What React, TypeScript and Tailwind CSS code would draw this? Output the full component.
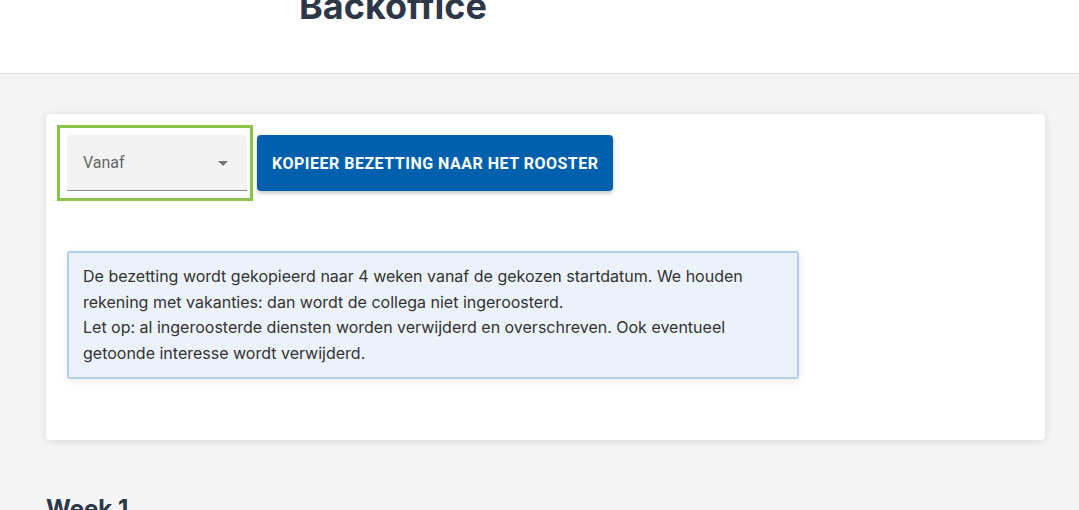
export default function App() {
    return (
        <div className="min-h-[510px] bg-[#f5f5f5] font-['Inter',sans-serif] overflow-hidden">
            <header className="h-[74px] bg-white border-b border-[#dddddd] overflow-hidden">
                <h1 className="pl-[299px] mt-[-12px] text-[36px] leading-[36px] font-bold text-[#2d3748]">
                    Backoffice
                </h1>
            </header>

            <main className="pl-[46px] pt-[40px]">
                <section className="w-[999px] h-[326px] bg-white rounded-[4px] shadow-[0_1px_8px_rgba(0,0,0,0.12)] pt-[21px] px-[21px]">
                    <div className="flex items-start">
                        <div className="relative">
                            <div className="absolute -left-[10px] -right-[6px] -top-[10px] -bottom-[10px] border-[3px] border-[#8bc34a]" />
                            <div className="relative w-[180px] h-[56px] bg-[#f3f3f3] rounded-t-[4px] border-b border-[#8a8a8a] flex items-center justify-between pl-[16px] pr-[19px] pt-px font-['Roboto',sans-serif] text-[16px] text-[#666666]">
                                <span>Vanaf</span>
                                <span className="w-0 h-0 border-l-[5px] border-r-[5px] border-t-[5px] border-l-transparent border-r-transparent border-t-[#757575]" />
                            </div>
                        </div>
                        <button className="ml-[10px] h-[56px] px-[15px] pt-px bg-[#0060ad] text-white rounded-[4px] shadow-[0_2px_4px_rgba(0,0,0,0.25)] font-['Roboto',sans-serif] font-bold text-[16px] tracking-[0.5px] uppercase">
                            Kopieer bezetting naar het rooster
                        </button>
                    </div>

                    <div className="mt-[60px] w-[732px] bg-[#ebf2f9] border-2 border-[#b4cfe8] rounded-[3px] shadow-[0_2px_10px_rgba(0,0,0,0.08)] px-[14px] py-[11px] text-[16px] leading-[25.6px] text-[#333333]">
                        De bezetting wordt gekopieerd naar 4 weken vanaf de gekozen startdatum. We houden rekening met vakanties: dan wordt de collega niet ingeroosterd.
                        <br />
                        Let op: al ingeroosterde diensten worden verwijderd en overschreven. Ook eventueel getoonde interesse wordt verwijderd.
                    </div>
                </section>

                <h2 className="mt-[53px] text-[24px] leading-[32px] font-bold text-[#2d3748]">Week 1</h2>
            </main>
        </div>
    );
}
